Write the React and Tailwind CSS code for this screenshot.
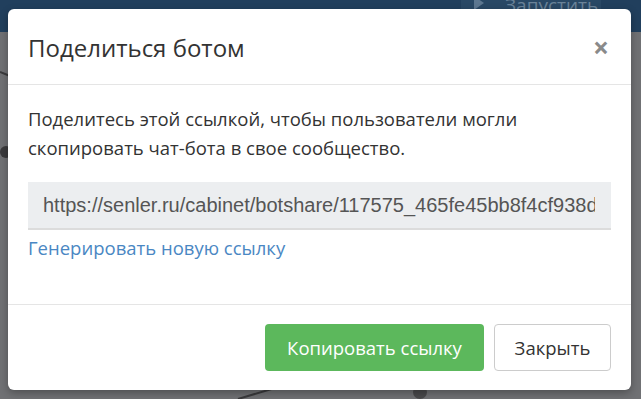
import React from "react";

export default function App() {
  return (
    <div className="relative w-[641px] h-[399px] overflow-hidden bg-[#707174] font-['Open_Sans',sans-serif]">
      {/* background app (dimmed by overlay) */}
      <div className="absolute inset-0">
        <div className="h-[32px] bg-[#213f5d] flex justify-end pr-[40px]">
          <div className="w-[140px] h-[32px] bg-[#294865] flex items-start pl-[12px] gap-[20px] -mt-[7px]">
            <svg width="12" height="16" viewBox="0 0 12 16" className="mt-[2px]"><path d="M1 1 L11 8 L1 15 Z" fill="#5d7790" /></svg>
            <span className="text-[19px] leading-[24px] text-[#6a8298]">Запустить</span>
          </div>
        </div>
        <svg className="absolute left-0 top-0" width="641" height="399">
          <path d="M0 72 L10 76" stroke="#3a3a3c" strokeWidth="2" fill="none" />
          <circle cx="6" cy="152" r="6" fill="#3a3a3c" />
          <path d="M238 399 L275 388" stroke="#3a3a3c" strokeWidth="2" fill="none" />
          <circle cx="420" cy="392" r="7" fill="#4a4a4c" />
        </svg>
      </div>

      {/* modal */}
      <div className="relative ml-[8px] mt-[9px] w-[623px] h-[381px] bg-white rounded-[6px] flex flex-col shadow-[0_3px_9px_rgba(0,0,0,0.3)]">
        <div className="h-[76px] px-[20px] flex items-center justify-between border-b border-[#e5e5e5]">
          <h4 className="text-[24px] text-[#333] pt-[2px]">Поделиться ботом</h4>
          <span className="text-[28px] leading-none font-bold text-[#8a8a8a] pr-[2px]">×</span>
        </div>
        <div className="h-[220px] px-[20px] pt-[19px] border-b border-[#e5e5e5]">
          <p className="text-[18.5px] leading-[29px] text-[#333]">
            Поделитесь этой ссылкой, чтобы пользователи могли скопировать чат-бота в свое сообщество.
          </p>
          <div className="mt-[20px] h-[48px] bg-[#eceef0] border-b-2 border-[#dcdcdc] pl-[15px] pr-[16px] flex items-center overflow-hidden">
            <span className="whitespace-nowrap overflow-hidden font-['Liberation_Sans',sans-serif] text-[20px] text-[#555]">
              https://senler.ru/cabinet/botshare/117575_465fe45bb8f4cf938d
            </span>
          </div>
          <div className="mt-[3px] text-[18.5px] leading-[29px] text-[#4a87c3]">Генерировать новую ссылку</div>
        </div>
        <div className="flex-1 px-[20px] flex items-center justify-end gap-[10px]">
          <button className="w-[219px] h-[47px] rounded-[4px] bg-[#5cb85c] text-white text-[18.5px]">Копировать ссылку</button>
          <button className="w-[117px] h-[47px] rounded-[4px] bg-white border border-[#ccc] text-[#333] text-[18.5px]">Закрыть</button>
        </div>
      </div>
    </div>
  );
}
